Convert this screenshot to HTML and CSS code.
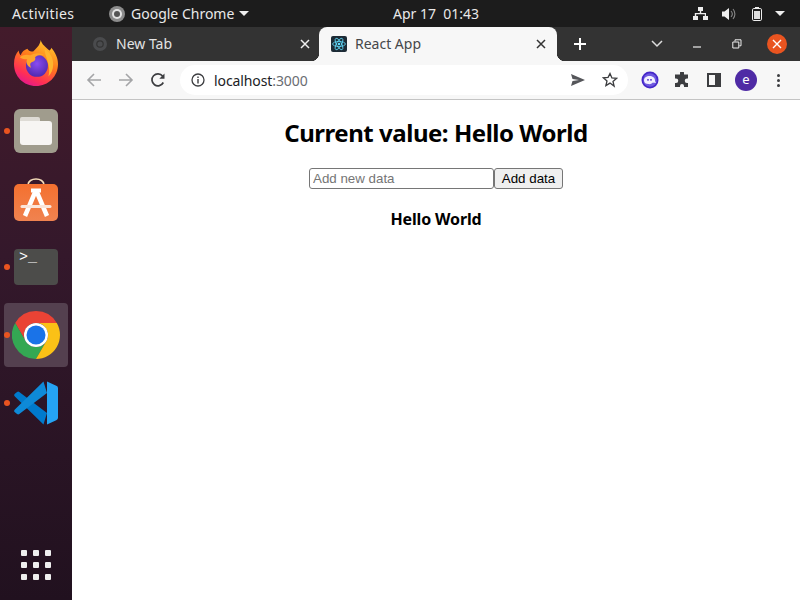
FILE: index.html
```html
<!doctype html>
<html lang="en">
<head>
    <meta charset="utf-8" />
    <title>React App</title>
    <link rel="stylesheet" href="styles.css">
</head>
<body>
    <header class="topbar">
        <div class="top-left">
            <span class="activities">Activities</span>
            <span class="app-menu">
                <svg class="app-icon" width="18" height="18" viewBox="0 0 18 18"><circle cx="9" cy="9" r="8" fill="#8c8c8c"/><circle cx="9" cy="9" r="5" fill="#e4e4e4"/><circle cx="9" cy="9" r="3" fill="#555"/></svg>
                Google Chrome
                <span class="caret"></span>
            </span>
        </div>
        <span class="clock">Apr 17&nbsp;&nbsp;01:43</span>
        <div class="tray">
            <svg class="tray-net" width="15" height="13" viewBox="0 0 15 13"><path d="M5 0h5v4H8.200v2H13v3h2v4h-5V9h1.800V7.300H3.200V9H5v4H0V9h1.800V6h5V4H5z" fill="#eee"/></svg>
            <svg class="tray-vol" width="14" height="14" viewBox="0 0 14 14"><path d="M0 4.500h2.500L7 1v12L2.500 9.500H0z" fill="#eee"/><path d="M9 4a4.500 4.500 0 0 1 0 6M11 2a7.500 7.500 0 0 1 0 10" fill="none" stroke="#888" stroke-width="1.100"/></svg>
            <svg class="tray-bat" width="10" height="14" viewBox="0 0 10 14"><rect x="0.500" y="1.500" width="9" height="12" rx="1.300" fill="none" stroke="#eee"/><rect x="3" y="0" width="4" height="1.500" fill="#eee"/><rect x="2" y="4" width="6" height="8" fill="#ddd"/></svg>
            <span class="caret"></span>
        </div>
    </header>

    <div class="desktop">
        <nav class="dock">
            <div class="dock-item">
                <svg width="44" height="46" viewBox="0 0 46 48">
                    <defs>
                        <linearGradient id="fxBody" x1="0.8" y1="0" x2="0.3" y2="1"><stop offset="0" stop-color="#ffd02e"/><stop offset="0.45" stop-color="#ff7a1c"/><stop offset="0.8" stop-color="#ff2f55"/><stop offset="1" stop-color="#e3188f"/></linearGradient>
                        <radialGradient id="fxGlobe" cx="0.5" cy="0.4" r="0.6"><stop offset="0" stop-color="#8a4cf0"/><stop offset="1" stop-color="#4f2ab0"/></radialGradient>
                    </defs>
                    <path d="M28 0c1 5 5 7 9 11 1-1 2-2 2-3 4 5 7 10 7 17 0 13-10 23-23 23S0 38 0 25C0 19 2 14 5 11c0 2 1 4 2 5 1-4 4-6 7-7 1 2 3 3 6 3 3-3 7-6 8-12z" fill="url(#fxBody)"/>
                    <circle cx="24" cy="27" r="11.500" fill="url(#fxGlobe)"/>
                    <path d="M6 18c4-3 8-3 11-2 5-3 11-3 15 0-4-1-8 0-10 2 1 2 0 4-3 5-3 1-2 4-1 6-5-2-6-7-4-9-3 0-6 0-8-2z" fill="#ffa52b"/>
                    <path d="M32 9c5 3 9 9 9 16 0 6-2 10-5 13 1-4 1-8 0-12-1-7-4-11-4-17z" fill="#ffb52e"/>
                </svg>
            </div>
            <div class="dock-item">
                <div class="files">
                    <div class="folder-tab"></div>
                    <div class="folder"></div>
                </div>
                <span class="dot"></span>
            </div>
            <div class="dock-item">
                <svg width="44" height="43" viewBox="0 0 44 43">
                    <defs><linearGradient id="bag" x1="0" y1="0" x2="0" y2="1"><stop offset="0" stop-color="#f4702f"/><stop offset="1" stop-color="#f08350"/></linearGradient></defs>
                    <path d="M14 7c0-8 16-8 16 0" fill="none" stroke="#f4dcb8" stroke-width="1.600"/>
                    <rect x="0" y="6" width="44" height="37" rx="5" fill="url(#bag)"/>
                    <path d="M22 12 11 38M22 12l11 26" fill="none" stroke="#fff" stroke-width="4.500"/>
                    <path d="M17 12.500h10" stroke="#fff" stroke-width="4" fill="none"/>
                    <path d="M8 28.500h28" stroke="#fbe6da" stroke-width="3" stroke-linecap="round" fill="none"/>
                </svg>
            </div>
            <div class="dock-item">
                <div class="terminal">&gt;_</div>
                <span class="dot"></span>
            </div>
            <div class="dock-item dock-active">
                <svg width="48" height="48" viewBox="0 0 48 48">
                    <path d="M24 0a24 24 0 0 1 20.780 12H24a12 12 0 0 0-10.400 18L3.200 12A24 24 0 0 1 24 0z" fill="#ea4335"/>
                    <path d="M3.200 12A24 24 0 0 0 24 48l10.400-18a12 12 0 0 1-20.800 0z" fill="#34a853"/>
                    <path d="M44.780 12A24 24 0 0 1 24 48l10.400-18A12 12 0 0 0 24 12z" fill="#fbc116"/>
                    <circle cx="24" cy="24" r="12" fill="#fff"/>
                    <circle cx="24" cy="24" r="9.500" fill="#1a73e8"/>
                </svg>
                <span class="dot"></span>
            </div>
            <div class="dock-item">
                <svg width="44" height="44" viewBox="0 0 100 100">
                    <path d="M2 35a4 4 0 0 1 0-6l5-4a4 4 0 0 1 5 0l63 48-8 26z" fill="#007acc"/>
                    <path d="M2 65a4 4 0 0 0 0 6l5 4a4 4 0 0 0 5 0L75 27l-8-26z" fill="#0e8ad8"/>
                    <path d="M75 1l21 10a6 6 0 0 1 4 6v66a6 6 0 0 1-4 6L75 99z" fill="#25a4f4"/>
                </svg>
                <span class="dot"></span>
            </div>
            <div class="apps-grid">
                <i></i><i></i><i></i><i></i><i></i><i></i><i></i><i></i><i></i>
            </div>
        </nav>

        <div class="browser">
            <div class="tabstrip">
                <div class="tab tab-inactive">
                    <svg class="favicon" width="16" height="16" viewBox="0 0 16 16"><circle cx="8" cy="8" r="7" fill="#4a4b4d"/><circle cx="8" cy="8" r="3.800" fill="#333"/><circle cx="8" cy="8" r="2.600" fill="#4a4b4d"/></svg>
                    <span class="tab-title">New Tab</span>
                    <svg class="tab-close" width="10" height="10" viewBox="0 0 10 10"><path d="M1 1l8 8M9 1l-8 8" stroke="#eee" stroke-width="1.500" fill="none"/></svg>
                </div>
                <div class="tab tab-active">
                    <svg class="favicon" width="16" height="16" viewBox="0 0 16 16"><rect width="16" height="16" rx="2" fill="#1d2b36"/><g fill="none" stroke="#61dafb" stroke-width="0.800"><ellipse cx="8" cy="8" rx="6.400" ry="2.500"/><ellipse cx="8" cy="8" rx="6.400" ry="2.500" transform="rotate(60 8 8)"/><ellipse cx="8" cy="8" rx="6.400" ry="2.500" transform="rotate(120 8 8)"/></g><circle cx="8" cy="8" r="1.300" fill="#61dafb"/></svg>
                    <span class="tab-title">React App</span>
                    <svg class="tab-close" width="10" height="10" viewBox="0 0 10 10"><path d="M1 1l8 8M9 1l-8 8" stroke="#333" stroke-width="1.500" fill="none"/></svg>
                </div>
                <svg class="new-tab" width="14" height="14" viewBox="0 0 14 14"><path d="M7 1v12M1 7h12" stroke="#fff" stroke-width="2" fill="none"/></svg>
                <div class="window-controls">
                    <span class="win-btn"><svg width="12" height="8" viewBox="0 0 12 8"><path d="M1 1l5 5 5-5" stroke="#ddd" stroke-width="1.500" fill="none"/></svg></span>
                    <span class="win-btn"><svg width="10" height="10" viewBox="0 0 10 10"><path d="M1 8h8" stroke="#eee" stroke-width="1.200" fill="none"/></svg></span>
                    <span class="win-btn"><svg width="10" height="10" viewBox="0 0 10 10"><path d="M3 2.500V.8h6v6H7.300M.8 3h6v6h-6z" stroke="#eee" stroke-width="1" fill="none"/></svg></span>
                    <span class="win-btn"><span class="win-close"><svg width="10" height="10" viewBox="0 0 10 10"><path d="M1 1l8 8M9 1l-8 8" stroke="#fff" stroke-width="1.400" fill="none"/></svg></span></span>
                </div>
            </div>

            <div class="toolbar">
                <div class="nav-buttons">
                    <svg width="16" height="16" viewBox="0 0 16 16"><path d="M15 8H2M8 2 2 8l6 6" stroke="#a4a5a7" stroke-width="1.600" fill="none"/></svg>
                    <svg width="16" height="16" viewBox="0 0 16 16"><path d="M1 8h13M8 2l6 6-6 6" stroke="#a4a5a7" stroke-width="1.600" fill="none"/></svg>
                    <svg width="16" height="16" viewBox="0 0 16 16"><path d="M13.300 10.500A6 6 0 1 1 12.600 4" stroke="#3c3d40" stroke-width="1.700" fill="none"/><path d="M14.500 1.500v5.200H9.300z" fill="#3c3d40"/></svg>
                </div>
                <div class="omnibox">
                    <svg class="info-icon" width="14" height="14" viewBox="0 0 14 14"><circle cx="7" cy="7" r="6" fill="none" stroke="#3c3d40" stroke-width="1.300"/><path d="M7 6v4.400M7 3.400v1.500" stroke="#3c3d40" stroke-width="1.400" fill="none"/></svg>
                    <span class="url">localhost<span class="url-port">:3000</span></span>
                    <svg class="send-icon" width="16" height="14" viewBox="0 0 16 14"><path d="M1 1l14 6-14 6 1.500-5L9 7 2.500 6z" fill="#55565a"/></svg>
                    <svg width="16" height="16" viewBox="0 0 16 16"><path d="M8 1.500l1.900 4.400 4.700.4-3.600 3.100 1.100 4.700L8 11.100l-4.100 2.500L5 8.900 1.400 5.800l4.700-.4z" fill="none" stroke="#3c3d40" stroke-width="1.300"/></svg>
                </div>
                <div class="extensions">
                    <span class="ext-btn"><svg width="18" height="18" viewBox="0 0 18 18"><circle cx="9" cy="9" r="8.500" fill="#4527c9"/><circle cx="9" cy="9" r="6.800" fill="#6f5ae0"/><path d="M3 9.500C3 6.500 5.500 5 8.500 5s5.500 1.700 5.500 4.500c0 1 .5 1.500 1.200 2-1.500.6-2.700.2-3.200.1-1.500 1.400-3 1.900-4.500 1.500C5 13 3 12 3 9.500z" fill="#f3f1ff"/><circle cx="7" cy="8.800" r="0.900" fill="#4527c9"/><circle cx="10" cy="8.800" r="0.900" fill="#4527c9"/></svg></span>
                    <span class="ext-btn"><svg width="16" height="16" viewBox="0 0 16 16"><path d="M6 1a2 2 0 0 1 4 0v1.500h4v4h-1a2 2 0 0 0 0 4.500h1V15h-4v-1a2 2 0 0 0-4 0v1H1v-4h1a2.200 2.200 0 0 0 0-4.500H1v-4h5z" fill="#3c3d40"/></svg></span>
                    <span class="ext-btn"><svg width="14" height="14" viewBox="0 0 14 14"><rect x="1" y="1" width="12" height="12" fill="none" stroke="#3c3d40" stroke-width="2"/><rect x="8" y="1" width="5" height="12" fill="#3c3d40"/></svg></span>
                    <span class="ext-btn"><span class="avatar">e</span></span>
                    <span class="ext-btn"><span class="menu-dots"><i></i><i></i><i></i></span></span>
                </div>
            </div>

            <main class="page">
                <h1>Current value: Hello World</h1>
                <div class="add-row">
                    <input class="add-input" type="text" placeholder="Add new data" />
                    <button class="add-btn">Add data</button>
                </div>
                <h4>Hello World</h4>
            </main>
        </div>
    </div>
</body>
</html>
```

FILE: styles.css
```css
* { box-sizing: border-box; }

html, body { height: 100%; }

body {
    margin: 0;
    overflow: hidden;
    display: flex;
    flex-direction: column;
    background: #fff;
    font-family: "Noto Sans", "Open Sans", sans-serif;
}

/* gnome top bar */
.topbar {
    height: 27px;
    flex: none;
    display: flex;
    align-items: center;
    background: #1c1c1c;
    color: #e9e9e9;
    font-size: 14px;
}
.top-left {
    width: 393px;
    display: flex;
    align-items: center;
    padding-left: 12px;
}
.activities { width: 96px; letter-spacing: 0.4px; }
.app-menu {
    display: flex;
    align-items: center;
    gap: 5px;
}
.caret {
    width: 0;
    height: 0;
    border-left: 5px solid transparent;
    border-right: 5px solid transparent;
    border-top: 5px solid #eee;
}
.clock { width: 87px; white-space: nowrap; }
.tray {
    flex: 1;
    display: flex;
    align-items: center;
    justify-content: flex-end;
    padding-right: 15px;
}
.tray-vol { margin-left: 14px; }
.tray-bat { margin: 0 13px 0 16px; }

.desktop {
    flex: 1;
    display: flex;
    min-height: 0;
}

/* dock */
.dock {
    width: 72px;
    flex: none;
    display: flex;
    flex-direction: column;
    align-items: center;
    gap: 4px;
    padding-top: 4px;
    padding-bottom: 20px;
    background: linear-gradient(180deg, #431b2b 0%, #34182b 40%, #21111f 100%);
}
.dock-item {
    position: relative;
    width: 64px;
    height: 64px;
    display: flex;
    align-items: center;
    justify-content: center;
    border-radius: 4px;
}
.dock-active { background: #54404f; }
.dot {
    position: absolute;
    left: 0;
    top: 29px;
    width: 6px;
    height: 6px;
    border-radius: 50%;
    background: #e95420;
}

.files {
    width: 44px;
    height: 44px;
    padding: 8px 6px;
    border-radius: 6px;
    background: #a09c8d;
    display: flex;
    flex-direction: column;
}
.folder-tab {
    width: 20px;
    height: 4px;
    border-radius: 2px 2px 0 0;
    background: #dedbd5;
}
.folder {
    flex: 1;
    border-radius: 0 3px 3px 3px;
    background: #f7f5f3;
}
.terminal {
    width: 44px;
    height: 36px;
    padding: 1px 0 0 5px;
    border-radius: 4px;
    background: #4c4c4a;
    color: #fff;
    font: 15px/15px "Liberation Mono", monospace;
}
.apps-grid {
    margin-top: auto;
    width: 30px;
    display: grid;
    grid-template-columns: repeat(3, 6px);
    justify-content: space-between;
    row-gap: 6px;
}
.apps-grid i {
    height: 6px;
    border-radius: 1px;
    background: #efefef;
}

/* chrome window */
.browser {
    flex: 1;
    min-width: 0;
    display: flex;
    flex-direction: column;
}
.tabstrip {
    height: 34px;
    flex: none;
    display: flex;
    align-items: center;
    background: #333;
}
.tab {
    position: relative;
    height: 34px;
    display: flex;
    align-items: center;
    padding-bottom: 1px;
    font-size: 14px;
}
.tab-inactive {
    width: 247px;
    padding-left: 20px;
    color: #e3e3e3;
}
.tab-active {
    width: 238px;
    padding-left: 12px;
    color: #45474a;
    background: #f7f7f7;
    border-radius: 8px 8px 0 0;
}
.tab-active::before,
.tab-active::after {
    content: "";
    position: absolute;
    bottom: 0;
    width: 8px;
    height: 8px;
}
.tab-active::before {
    left: -8px;
    background: radial-gradient(circle at 0 0, transparent 8px, #f7f7f7 8.5px);
}
.tab-active::after {
    right: -8px;
    background: radial-gradient(circle at 100% 0, transparent 8px, #f7f7f7 8.5px);
}
.favicon { flex: none; }
.tab-title { margin-left: 8px; flex: 1; }
.tab-close { flex: none; margin-right: 11px; }
.tab-inactive .tab-close { margin-right: 9px; }
.new-tab { margin-left: 16px; }
.window-controls {
    flex: 1;
    display: flex;
    align-items: center;
    justify-content: flex-end;
    padding-right: 3px;
}
.win-btn {
    width: 40px;
    display: flex;
    align-items: center;
    justify-content: center;
}
.win-close {
    width: 20px;
    height: 20px;
    border-radius: 50%;
    background: #e95420;
    display: flex;
    align-items: center;
    justify-content: center;
}

.toolbar {
    height: 39px;
    flex: none;
    display: flex;
    align-items: center;
    background: #f7f7f7;
    border-bottom: 1px solid #c4c4c4;
    padding-left: 14px;
}
.nav-buttons {
    display: flex;
    gap: 16px;
    width: 94px;
}
.omnibox {
    width: 448px;
    height: 30px;
    display: flex;
    align-items: center;
    padding: 0 10px 0 11px;
    border-radius: 15px;
    background: #fff;
}
.url {
    flex: 1;
    margin-left: 9px;
    font-size: 14px;
    letter-spacing: -0.1px;
    color: #202124;
}
.url-port { color: #6a6d72; }
.send-icon { margin-right: 16px; }
.extensions {
    flex: 1;
    display: flex;
    align-items: center;
    padding-left: 6px;
}
.ext-btn {
    width: 32px;
    display: flex;
    align-items: center;
    justify-content: center;
}
.avatar {
    width: 22px;
    height: 22px;
    border-radius: 50%;
    background: #4f2ba5;
    color: #fff;
    font-size: 13px;
    line-height: 20px;
    text-align: center;
}
.menu-dots {
    display: flex;
    flex-direction: column;
    gap: 2px;
}
.menu-dots i {
    width: 3px;
    height: 3px;
    border-radius: 50%;
    background: #3c3d40;
}

/* page content */
.page {
    flex: 1;
    text-align: center;
    color: #000;
}
.page h1 {
    margin: 17px 0 19px;
    font-size: 24px;
    line-height: 32px;
    font-weight: 700;
    letter-spacing: -0.47px;
}
.add-row {
    display: flex;
    justify-content: center;
}
.add-input {
    width: 185px;
    height: 21px;
    margin: 0;
    padding: 1px 3px;
    border: 1px solid #767676;
    border-radius: 3px;
    font: 13.33px "Liberation Sans", sans-serif;
}
.add-input::placeholder { color: #757575; }
.add-btn {
    width: 69px;
    height: 21px;
    margin: 0;
    padding: 0;
    border: 1px solid #767676;
    border-radius: 3px;
    background: #efefef;
    color: #000;
    font: 13.33px "Liberation Sans", sans-serif;
}
.page h4 {
    margin: 19px 0 0;
    font-size: 16px;
    line-height: 22px;
    font-weight: 700;
    letter-spacing: -0.15px;
}
```
